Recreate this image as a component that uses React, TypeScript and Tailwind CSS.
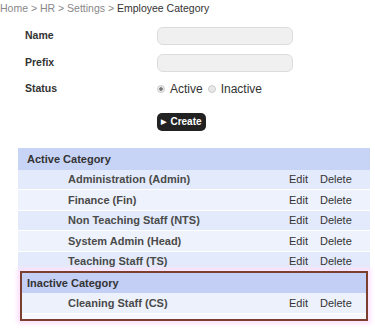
const activeRows = [
  'Administration (Admin)',
  'Finance (Fin)',
  'Non Teaching Staff (NTS)',
  'System Admin (Head)',
  'Teaching Staff (TS)',
]

function Row({ name, even }: { name: string; even: boolean }) {
  return (
    <div
      className={`flex h-[20.5px] items-center border-b border-white text-[11px] ${
        even ? 'bg-[#e3eafb]' : 'bg-[#eef2fc]'
      }`}
    >
      <span className="ml-[50px] flex-1 font-bold text-[#4a4a4a]">{name}</span>
      <span className="w-[31px] text-[#333]">Edit</span>
      <span className="w-[50px] text-[#333]">Delete</span>
    </div>
  )
}

export default function App() {
  return (
    <div className="h-[334px] w-[375px] overflow-hidden bg-white font-['Liberation_Sans',Arial,sans-serif]">
      <div className="pt-[1px] text-[10.5px] text-[#888]">
        Home &gt; HR &gt; Settings &gt; <span className="text-[#333]">Employee Category</span>
      </div>

      <div className="mt-[10px] flex flex-col gap-[9px] pl-[25px] text-[10.5px] font-bold text-[#333]">
        <div className="flex h-[18px] items-center">
          <span className="w-[132px]">Name</span>
          <div className="h-[18px] w-[136px] rounded-[6px] border border-[#dcdcdc] bg-[#f0f0f0]" />
        </div>
        <div className="flex h-[18px] items-center">
          <span className="w-[132px]">Prefix</span>
          <div className="h-[18px] w-[136px] rounded-[6px] border border-[#dcdcdc] bg-[#f0f0f0]" />
        </div>
        <div className="mt-[-1px] flex h-[18px] items-center">
          <span className="w-[132px]">Status</span>
          <div className="flex items-center text-[12px] font-normal text-[#333]">
            <span className="mr-[5px] inline-block h-[8px] w-[8px] rounded-full border border-[#ccc] bg-[radial-gradient(circle,#777_35%,#e8e8e8_45%)]" />
            <span>Active</span>
            <span className="ml-[5px] mr-[5px] inline-block h-[8px] w-[8px] rounded-full border border-[#ccc] bg-[#e8e8e8]" />
            <span>Inactive</span>
          </div>
        </div>
      </div>

      <div className="mt-[15px] pl-[157px]">
        <div className="flex h-[18px] w-[49px] items-center justify-center gap-[4px] rounded-[5px] bg-[#222] text-[10px] font-bold text-white">
          <span className="text-[7px]">▶</span>
          <span>Create</span>
        </div>
      </div>

      <div className="ml-[18px] mt-[17px] w-[352px] text-[11px]">
        <div className="flex h-[22px] items-center bg-[#c8d4f6] pl-[9px] font-bold text-[#333]">
          Active Category
        </div>
        {activeRows.map((r, i) => (
          <Row key={r} name={r} even={i % 2 === 0} />
        ))}
      </div>

      <div className="ml-[18px] mt-[-1px] w-[352px]">
        <div className="mx-[2px] border-2 border-[#7b3f2f] shadow-[0_0_4px_3px_#fde3fb]">
          <div className="flex h-[20px] items-center bg-[#c3cff5] pl-[5px] text-[11px] font-bold text-[#333]">
            Inactive Category
          </div>
          <div className="flex h-[21px] items-center border-b border-white bg-[#edf1fc] text-[11px]">
            <span className="ml-[46px] flex-1 font-bold text-[#4a4a4a]">Cleaning Staff (CS)</span>
            <span className="w-[31px] text-[#333]">Edit</span>
            <span className="w-[46px] text-[#333]">Delete</span>
          </div>
          <div className="h-[5px] bg-[#f6f8fd]" />
        </div>
      </div>
    </div>
  )
}
